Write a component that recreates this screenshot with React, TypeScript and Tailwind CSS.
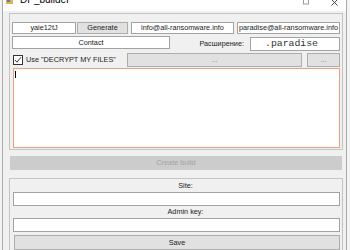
import React from "react";

const ui = { fontFamily: '"Liberation Sans", Arial, sans-serif' };
const mono = { fontFamily: '"Liberation Mono", "Courier New", monospace' };

function Box({ className = "", children }: { className?: string; children?: React.ReactNode }) {
  return (
    <div className={`bg-white border border-[#a3a3a3] flex items-center justify-center text-[7.3px] text-[#1c1c1c] leading-none whitespace-nowrap ${className}`}>
      {children}
    </div>
  );
}

function Btn({ className = "", children }: { className?: string; children?: React.ReactNode }) {
  return (
    <div className={`bg-[#e1e1e1] border border-[#adadad] flex items-center justify-center text-[7.3px] text-[#1c1c1c] leading-none ${className}`}>
      {children}
    </div>
  );
}

export default function App() {
  return (
    <div className="w-[350px] h-[250px] overflow-hidden bg-[#f3f3f3] pl-[2px]" style={ui}>
      <div className="w-[345px] h-full border-x border-[#ababab] bg-[#f0f0f0] flex flex-col">
        {/* title bar */}
        <div className="h-[11px] bg-white flex items-start overflow-hidden shrink-0">
          <svg width="7" height="5" viewBox="0 0 7 5" className="ml-[3px]">
            <rect x="0" y="0" width="7" height="4" fill="#e8b04a" />
            <rect x="1" y="0" width="3" height="2" fill="#4f7fc4" />
          </svg>
          <span className="ml-[7px] -mt-[5px] text-[10px] leading-[10px] text-black">DP_builder</span>
          <div className="flex-1" />
          <svg width="6" height="5" viewBox="0 0 6 5" className="mr-[22px]">
            <rect x="0.5" y="-1" width="5" height="5" fill="none" stroke="#9a9a9a" />
          </svg>
          <svg width="7" height="6" viewBox="0 0 7 6" className="mr-[8px]">
            <path d="M0.5 -0.5 L6.5 5.5 M6.5 -0.5 L0.5 5.5" stroke="#333" strokeWidth="0.9" />
          </svg>
        </div>

        {/* client */}
        <div className="ml-[6px] pt-[2px]">
          {/* group 1 */}
          <div className="w-[334px] h-[137px] border border-[#c4c4c4] pl-[2px] pt-[8px]">
            <div className="flex h-[12px]">
              <Box className="w-[64px] h-[12px]">yaie12tJ</Box>
              <Btn className="w-[51px] h-[12px] ml-[1px]">Generate</Btn>
              <Box className="w-[103px] h-[12px] ml-[3px]">info@all-ransomware.info</Box>
              <Box className="w-[103px] h-[12px] ml-[3px] text-[6.9px]">paradise@all-ransomware.info</Box>
            </div>
            <div className="flex items-start h-[15px] mt-[2px] w-[328px]">
              <Box className="w-[158px] h-[13px]">Contact</Box>
              <div className="flex-1 text-right pr-[6px] text-[7.3px] leading-[16px] text-[#1c1c1c]">Расширение:</div>
              <Box className="w-[90px] h-[14px] mt-[1px]">
                <span className="text-[9.8px] text-[#333] pr-[7px]" style={mono}>.paradise</span>
              </Box>
            </div>
            <div className="flex h-[14px] mt-[2px]">
              <div className="w-[115px] flex items-center">
                <div className="ml-[1px] w-[10px] h-[10px] border border-[#333] bg-white flex items-center justify-center">
                  <svg width="8" height="8" viewBox="0 0 8 8">
                    <path d="M1 4 L3 6.2 L7 1.2" fill="none" stroke="#222" strokeWidth="0.9" />
                  </svg>
                </div>
                <span className="ml-[3px] text-[7.3px] leading-none text-[#1c1c1c] whitespace-nowrap">Use "DECRYPT MY FILES"</span>
              </div>
              <Btn className="w-[175px] h-[14px] text-[#8a8a8a]">...</Btn>
              <Btn className="w-[33px] h-[14px] ml-[5px] text-[#8a8a8a]">...</Btn>
            </div>
            <div className="mt-[1px] ml-[1px] w-[327px] h-[80px] bg-white border border-[#e5a47f] pl-[1px] pt-[2px]">
              <div className="w-px h-[7px] bg-black" />
            </div>
          </div>

          {/* create build */}
          <div className="mt-[6px] ml-[1px] w-[332px] h-[14px] bg-[#cccccc] flex items-center justify-center text-[7.3px] text-[#a3a3a3]">
            Create build
          </div>

          {/* group 2 */}
          <div className="mt-[8px] w-[334px] h-[90px] border border-[#c4c4c4] pl-[3px] pt-[1px]">
            <div className="h-[12px] leading-[12px] text-center pl-[16px] text-[7.3px] text-[#1c1c1c]">Site:</div>
            <Box className="w-[327px] h-[14px]" />
            <div className="h-[12px] leading-[12px] text-center pl-[16px] text-[7.3px] text-[#1c1c1c]">Admin key:</div>
            <Box className="w-[327px] h-[14px]" />
            <Btn className="w-[326px] h-[15px] mt-[3px] ml-[1px]">Save</Btn>
          </div>
        </div>
      </div>
    </div>
  );
}
